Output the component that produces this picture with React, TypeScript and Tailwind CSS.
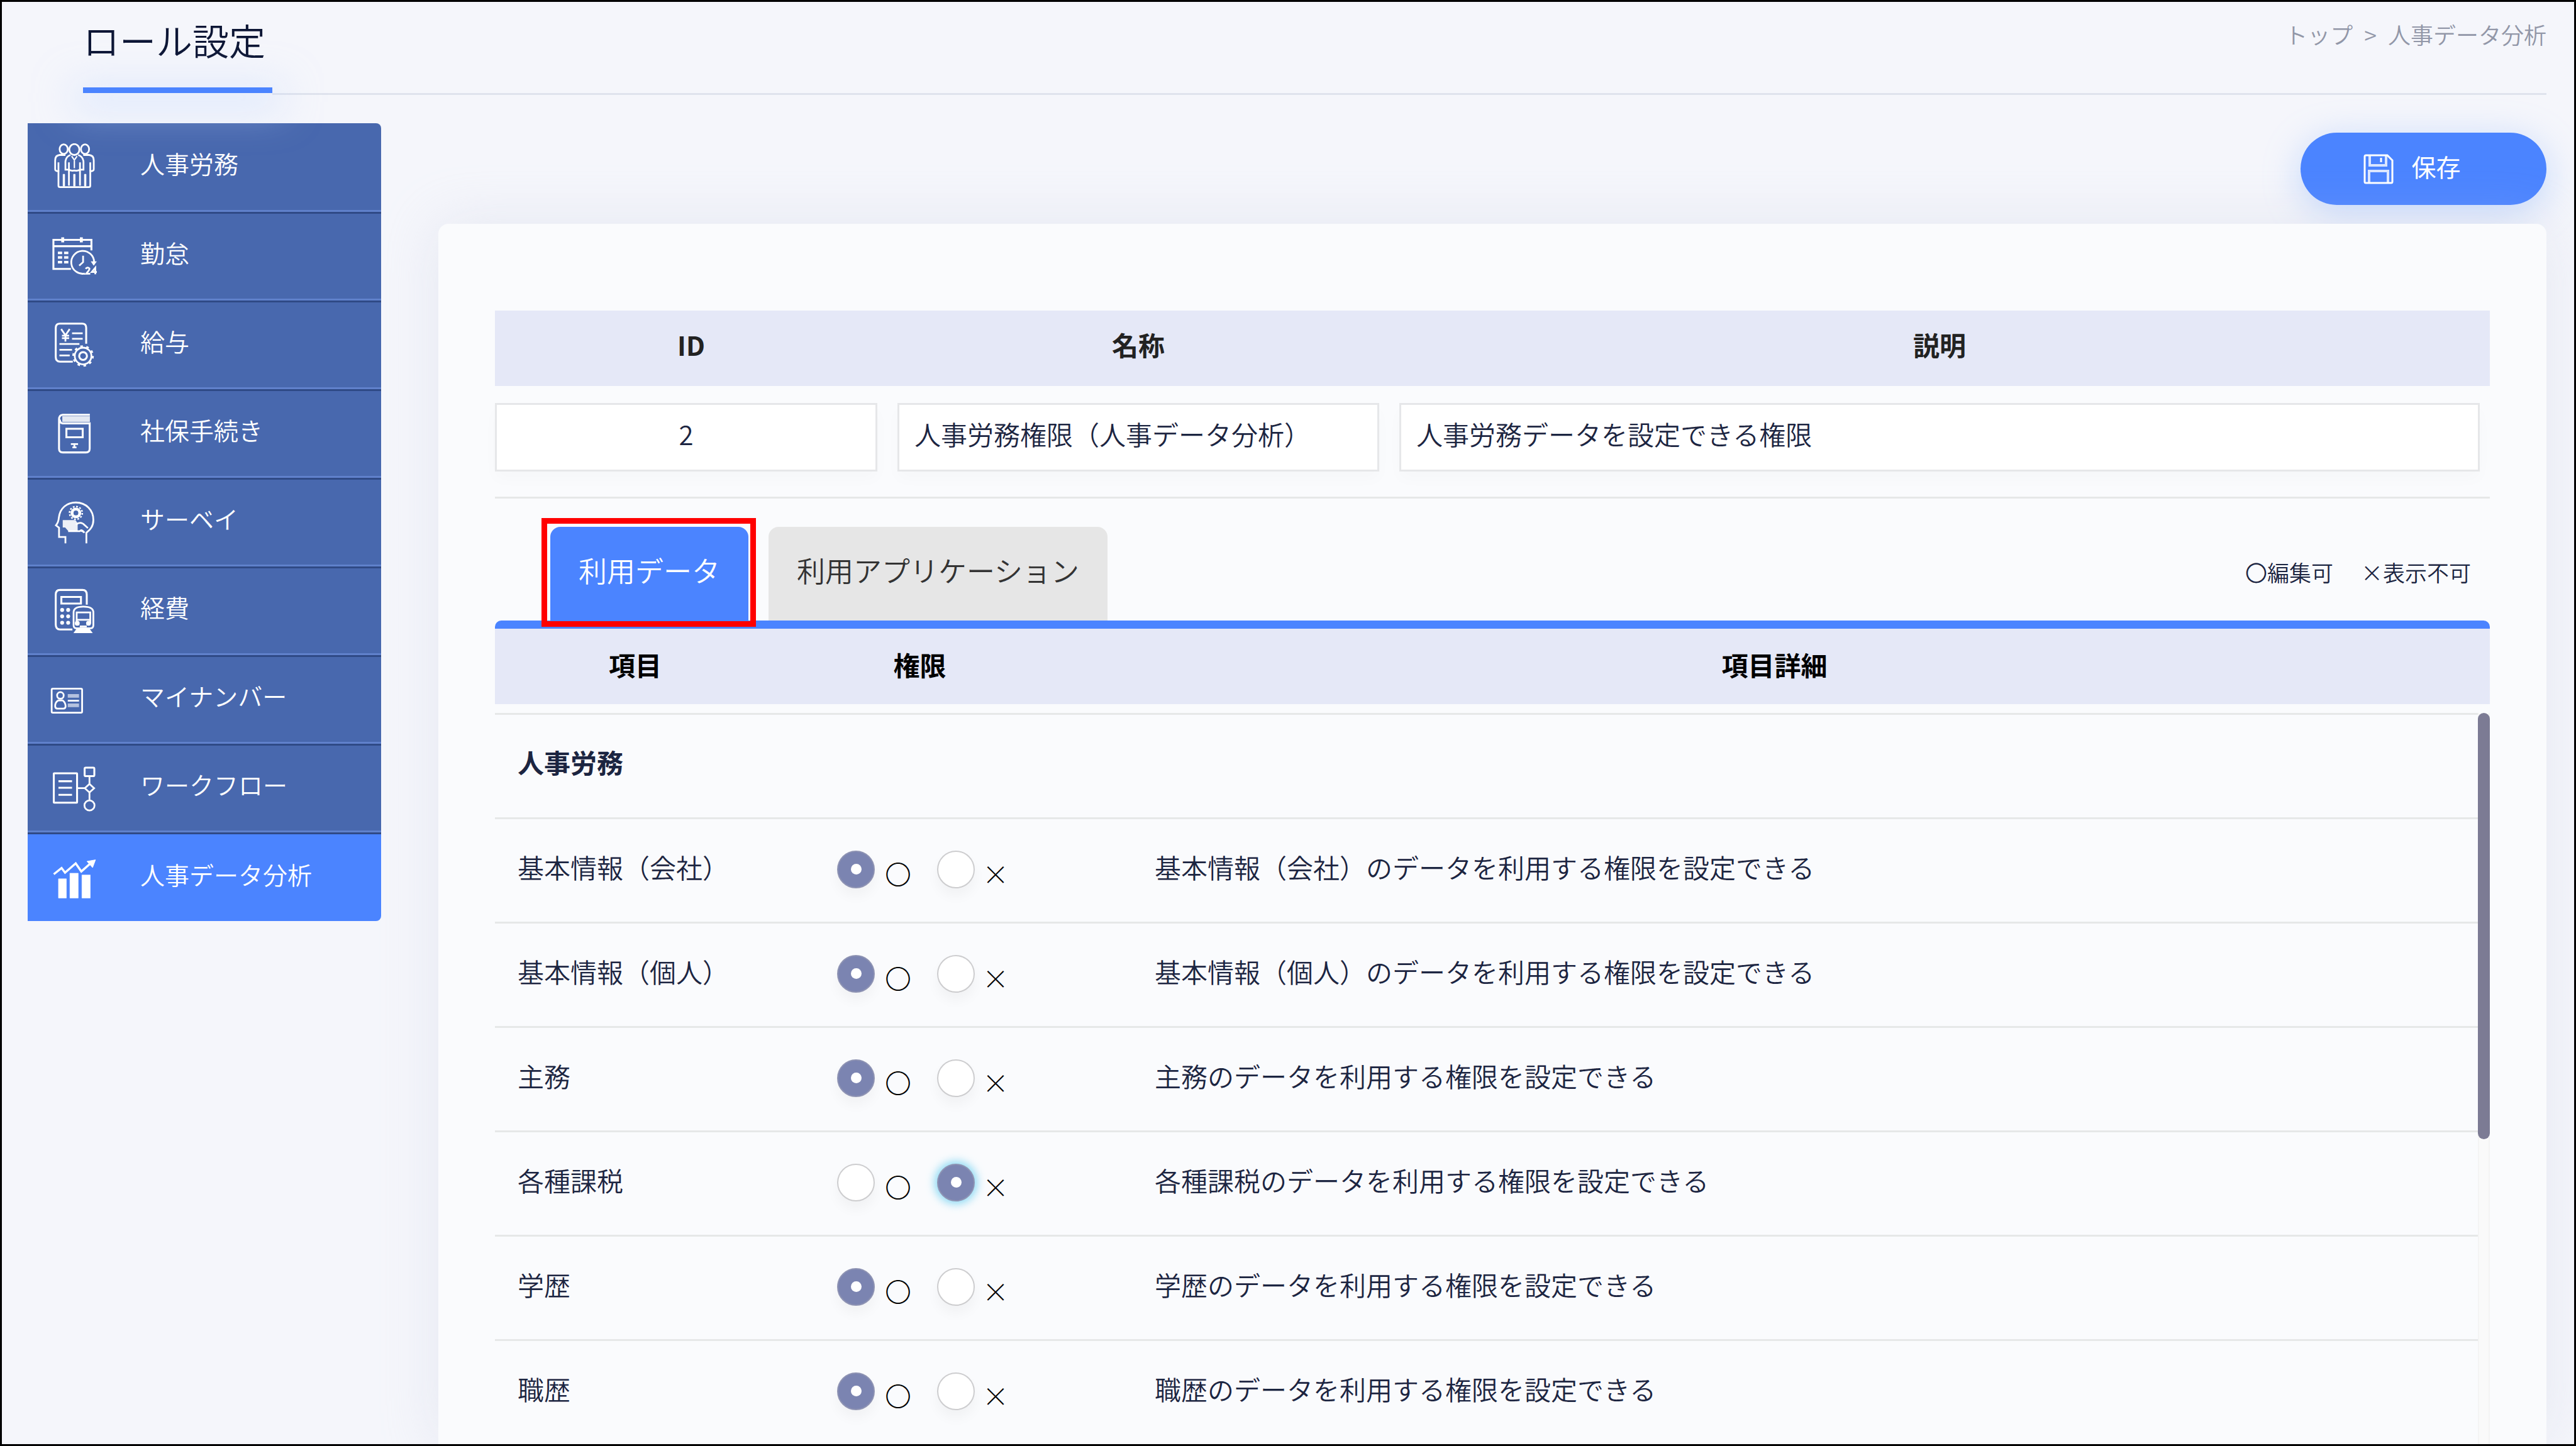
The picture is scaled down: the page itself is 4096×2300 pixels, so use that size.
import React, { useState } from "react";

const icons: { box: string; art: React.ReactNode }[] = [
  {
    box: "48 50 240 240",
    art: (
      <>
        <ellipse cx="117" cy="80" rx="21" ry="25" />
        <ellipse cx="227" cy="80" rx="21" ry="25" />
        <ellipse cx="172" cy="82" rx="26" ry="28" />
        <path d="M126 110H96Q73 112 73 138V184Q73 194 90 194V268Q90 276 98 276H246Q254 276 254 268V194Q272 194 272 184V138Q272 112 248 110H218" />
        <path d="M90 148V194M254 148V194M152 110Q128 118 126 145V186H144M192 110Q217 118 219 145V186H200M144 148V268M201 148V268M118 208V272M228 208V272M172 208V272M144 186Q158 194 172 190Q186 194 201 186" />
        <path d="M158 116L172 136L186 116M172 140V178" strokeWidth="7" />
        <path d="M172 210V270M118 210V270M228 210V270" opacity=".5" strokeWidth="13" />
      </>
    ),
  },
  {
    box: "48 506 240 240",
    art: (
      <>
        <path d="M260 594V540H64V690H154M64 573H258" strokeWidth="10" />
        <path d="M112 527V553M208 527V553" strokeWidth="15" />
        <path d="M87 607H109M119 607H141M87 631H109M119 631H141M87 655H109M119 655H141" strokeWidth="13" />
        <path d="M226 714A59 59 0 1 1 274 655" />
        <path d="M217 622V655L197 673" />
        <path d="M258 652H286L272 672Z" fill="white" strokeWidth="2" />
        <path d="M230 690Q240 678 250 688Q250 698 232 715H254M280 718V684L262 706H288" strokeWidth="9" />
      </>
    ),
  },
  {
    box: "48 961 240 240",
    art: (
      <>
        <path d="M233 1074V992Q233 970 212 970H98Q76 970 76 992V1142Q76 1166 98 1166H164" strokeWidth="10" />
        <path d="M104 998L126 1030L148 998M126 1030V1062M108 1032H145M108 1045H145" strokeWidth="9" />
        <path d="M160 1020H215M160 1048H215M95 1075H198M95 1105H160M95 1134H148" strokeWidth="9" />
        <circle cx="217" cy="1137" r="43" />
        <circle cx="217" cy="1137" r="20" strokeWidth="10" />
        <circle cx="217" cy="1137" r="50" strokeWidth="11" strokeDasharray="13 18.4" />
      </>
    ),
  },
  {
    box: "48 66 240 240",
    art: (
      <>
        <path d="M252 88H112Q93 90 93 112V262Q93 282 112 282H232Q251 282 251 262V132H112Q97 130 97 112" strokeWidth="10" />
        <path d="M112 96H250V122H112Z" fill="white" opacity=".85" strokeWidth="4" />
        <path d="M131 160H215V204H131Z" strokeWidth="10" />
        <path d="M154 239H191" strokeWidth="9" />
        <path d="M162 256H183M172 242V256" />
      </>
    ),
  },
  {
    box: "48 521 240 240",
    art: (
      <>
        <path d="M126 749V716H93V668L77 656Q90 640 92 616C98 566 134 538 180 538C232 538 270 578 270 628C270 660 256 676 234 694V749" strokeWidth="9" />
        <circle cx="180" cy="592" r="20" strokeWidth="15" />
        <circle cx="180" cy="592" r="33" strokeWidth="8" strokeDasharray="9 8.3" />
        <path d="M115 632H176L186 646V680H140L126 664H115Z" fill="white" opacity=".9" strokeWidth="6" />
        <path d="M180 652Q206 632 226 656L242 670M140 686H200Q210 674 224 694M206 684Q214 684 222 692" />
      </>
    ),
  },
  {
    box: "48 977 240 240",
    art: (
      <>
        <path d="M236 1064V1012Q236 988 214 988H98Q76 988 76 1012V1166Q76 1192 98 1192H162" strokeWidth="10" />
        <path d="M105 1024H206V1058H105Z" strokeWidth="10" />
        <g fill="white" stroke="none">
          <circle cx="109" cy="1091" r="10" />
          <circle cx="140" cy="1091" r="10" />
          <circle cx="109" cy="1124" r="10" />
          <circle cx="140" cy="1124" r="10" />
          <circle cx="109" cy="1157" r="10" />
          <circle cx="140" cy="1157" r="10" />
        </g>
        <path d="M168 1104Q168 1074 218 1074Q270 1074 270 1104V1170Q270 1186 254 1186H184Q168 1186 168 1170Z" />
        <path d="M184 1104H254V1142H184Z" />
        <path d="M184 1142V1162M254 1142V1162" />
        <circle cx="187" cy="1160" r="8" fill="white" />
        <circle cx="245" cy="1160" r="8" fill="white" />
        <path d="M200 1176H236M186 1192L176 1206H258L248 1192Z" fill="white" />
      </>
    ),
  },
  {
    box: "48 22 240 240",
    art: (
      <>
        <rect x="55" y="85" width="157" height="124" rx="6" />
        <circle cx="100" cy="120" r="17" />
        <path d="M88 146Q72 156 73 176Q74 188 84 188H116Q126 188 127 176Q126 156 112 146Z" />
        <path d="M138 122H196M138 171H196" strokeWidth="19" opacity=".6" />
        <path d="M138 147H196" />
      </>
    ),
  },
  {
    box: "48 477 240 240",
    art: (
      <>
        <rect x="66" y="519" width="120" height="152" rx="2" strokeWidth="10" />
        <path d="M90 560H160M90 594H160M90 630H160" strokeWidth="10" />
        <rect x="225" y="490" width="50" height="44" rx="6" strokeWidth="10" />
        <path d="M250 534V574M250 616V658M188 596H226" />
        <path d="M250 574L274 596L250 618L226 596Z" strokeWidth="9" />
        <circle cx="250" cy="685" r="26" strokeWidth="9" />
      </>
    ),
  },
  {
    box: "48 932 240 240",
    art: (
      <>
        <path d="M66 1034L106 1002L124 1026L179 978L208 1020L258 976" strokeWidth="11" />
        <path d="M237 968L281 960L266 1000Z" fill="white" strokeWidth="3" />
        <path d="M90 1058H131V1157H90ZM149 1029H192V1157H149ZM211 1038H254V1157H211Z" fill="white" strokeWidth="2" />
      </>
    ),
  },
];

const menu = [
  "人事労務",
  "勤怠",
  "給与",
  "社保手続き",
  "サーベイ",
  "経費",
  "マイナンバー",
  "ワークフロー",
  "人事データ分析",
];

const rows = [
  { name: "基本情報（会社）", allowed: true },
  { name: "基本情報（個人）", allowed: true },
  { name: "主務", allowed: true },
  { name: "各種課税", allowed: false, focused: true },
  { name: "学歴", allowed: true },
  { name: "職歴", allowed: true },
];

const fieldClass =
  "block h-[109px] w-full border-3 border-[#e6e7e9] bg-white px-6 pb-3 text-[42px] text-[#1c2541] shadow-[0_12px_24px_rgba(0,0,0,0.02)] outline-none";

const radioClass =
  "flex size-[60px] shrink-0 appearance-none items-center justify-center rounded-full border-2 border-[#cdcdcf] bg-white shadow-[0_12px_20px_rgba(0,0,0,0.04)] before:size-[17px] before:rounded-full before:bg-white before:content-[''] checked:border-[#8e93b3] checked:bg-[#7b84b1]";

const focusClass = " checked:border-[#4fbfe6] checked:shadow-[0_0_14px_4px_rgba(80,200,240,0.65)]";

function Sidebar() {
  return (
    <nav aria-label="メニュー" className="w-[562px] shrink-0 self-start">
      <ul className="overflow-hidden rounded-r-[8px]">
        {menu.map((label, i) => {
          const last = i === menu.length - 1;
          return (
            <li
              key={label}
              className={
                "h-[141px] " +
                (i > 0 ? "border-t-3 border-[#2f4a86] " : "") +
                (last ? "bg-[#4b84ff]" : "bg-[#4868ae]")
              }
            >
              <a
                href="#"
                aria-current={last ? "page" : undefined}
                className={
                  "flex h-full items-center pl-9 text-[39px] text-white " +
                  (last ? "" : "border-b-3 border-[#6081cb]")
                }
              >
                <svg
                  viewBox={icons[i].box}
                  className="mr-[69px] size-[74px] shrink-0"
                  fill="none"
                  stroke="white"
                  strokeWidth="9"
                  aria-hidden="true"
                >
                  {icons[i].art}
                </svg>
                <span className="pb-3">{label}</span>
              </a>
            </li>
          );
        })}
      </ul>
    </nav>
  );
}

function RoleTable() {
  return (
    <table className="w-full table-fixed border-separate border-spacing-0">
      <colgroup>
        <col className="w-[624px]" />
        <col className="w-[798px]" />
        <col />
      </colgroup>
      <thead>
        <tr className="h-[120px] bg-[#e5e8f7] text-[42px] text-[#222222]">
          <th className="pb-3.5">ID</th>
          <th className="pb-3.5">名称</th>
          <th className="pb-3.5">説明</th>
        </tr>
      </thead>
      <tbody>
        <tr>
          <td className="border-b-3 border-[#e6e8e8] pt-[27px] pr-4 pb-10">
            <input aria-label="ID" defaultValue="2" className={fieldClass + " text-center"} />
          </td>
          <td className="border-b-3 border-[#e6e8e8] px-4 pt-[27px] pb-10">
            <input aria-label="名称" defaultValue="人事労務権限（人事データ分析）" className={fieldClass} />
          </td>
          <td className="border-b-3 border-[#e6e8e8] px-4 pt-[27px] pb-10">
            <input aria-label="説明" defaultValue="人事労務データを設定できる権限" className={fieldClass} />
          </td>
        </tr>
      </tbody>
    </table>
  );
}

function Tabs() {
  const [active, setActive] = useState(0);
  return (
    <div className="flex items-end justify-between pt-[45px] pr-[30px] pl-[88px]">
      <div role="tablist" className="flex gap-8">
        {["利用データ", "利用アプリケーション"].map((label, i) => (
          <button
            key={label}
            role="tab"
            type="button"
            aria-selected={active === i}
            onClick={() => setActive(i)}
            className={
              "relative h-[149px] rounded-t-[16px] px-[45px] pb-3 text-[45px] " +
              (active === i ? "bg-[#4b84ff] text-white" : "bg-[#e6e6e6] text-[#333333]")
            }
          >
            {label}
            {i === 0 && <span className="absolute -top-3.5 -right-3 -bottom-2.5 -left-3.5 border-9 border-[#ff0000]" />}
          </button>
        ))}
      </div>
      <p className="flex h-[149px] items-center gap-[44px] pb-1 text-[35px] text-[#1c2541]">
        <span>〇編集可</span>
        <span>×表示不可</span>
      </p>
    </div>
  );
}

function PermissionTable() {
  return (
    <>
      <div className="h-[13px] shrink-0 rounded-t-[10px] bg-[#4b84ff]" />
      <table className="w-full table-fixed border-separate border-spacing-0">
        <colgroup>
          <col className="w-[446px]" />
          <col className="w-[459px]" />
          <col />
        </colgroup>
        <thead>
          <tr className="h-[120px] bg-[#e5e8f7] text-[42px] text-black">
            <th className="pb-2">項目</th>
            <th className="pb-2">権限</th>
            <th className="pr-2 pb-2">項目詳細</th>
          </tr>
        </thead>
      </table>
      <div className="mt-3.5 flex min-h-0 flex-1 overflow-hidden">
        <table className="flex-1 table-fixed border-separate border-spacing-0 self-start text-[42px] text-[#1c2541]">
          <colgroup>
            <col className="w-[544px]" />
            <col className="w-[505px]" />
            <col />
          </colgroup>
          <tbody>
            <tr className="h-[166px]">
              <th colSpan={3} className="border-t-3 border-[#e6e8e8] pb-3.5 pl-9 text-left">
                人事労務
              </th>
            </tr>
            {rows.map((row) => (
              <tr key={row.name} className="h-[166px]">
                <td className="border-t-3 border-[#e6e8e8] pb-3 pl-9">{row.name}</td>
                <td className="border-t-3 border-[#e6e8e8] pb-1">
                  <div className="flex gap-[41px]">
                    <label className="flex items-center gap-4">
                      <input type="radio" name={row.name} defaultChecked={row.allowed} className={radioClass} />
                      <span className="mt-3 font-light text-black">〇</span>
                    </label>
                    <label className="flex items-center gap-3">
                      <input
                        type="radio"
                        name={row.name}
                        defaultChecked={!row.allowed}
                        className={radioClass + (row.focused ? focusClass : "")}
                      />
                      <span className="mt-3 font-light text-black">×</span>
                    </label>
                  </div>
                </td>
                <td className="border-t-3 border-[#e6e8e8] pb-3">{row.name}のデータを利用する権限を設定できる</td>
              </tr>
            ))}
          </tbody>
        </table>
        <div className="w-[19px] shrink-0 border-x-2 border-[#f4f4f4] bg-[#fafafa]">
          <div className="-mx-0.5 h-[678px] rounded-full bg-[#7c7b94]" />
        </div>
      </div>
    </>
  );
}

export default function App() {
  return (
    <div className="flex h-screen flex-col overflow-hidden border-3 border-black bg-[#f5f6fb] font-['Noto_Sans_CJK_JP',sans-serif] font-[350]">
      <header className="flex h-[148px] shrink-0 items-start pr-11 pl-[129px]">
        <div className="relative z-10 flex h-[145px] w-[301px] flex-col">
          <h1 className="flex flex-1 items-center pb-4 text-[58px] leading-none font-[350] text-[#0d1635]">ロール設定</h1>
          <div className="h-[9px] bg-[#4b84ff] shadow-[0_12px_60px_16px_rgba(200,219,255,0.5)]" />
        </div>
        <nav
          aria-label="パンくず"
          className="flex h-full flex-1 items-start justify-end gap-[18px] border-b-3 border-[#dfe3ed] pt-6 text-[36px] text-[#9297a8]"
        >
          <a href="#">トップ</a>
          <span>&gt;</span>
          <span>人事データ分析</span>
        </nav>
      </header>
      <div className="flex min-h-0 flex-1 pt-[45px] pr-11 pl-[41px]">
        <Sidebar />
        <main className="ml-[91px] flex min-w-0 flex-1 flex-col pt-[15px]">
          <button
            type="button"
            className="flex h-[115px] w-[391px] shrink-0 items-center justify-center gap-7 self-end rounded-full bg-[#4b84ff] pr-9 text-[39px] font-normal text-white shadow-[0_12px_60px_rgba(120,170,255,0.4)]"
          >
            <svg viewBox="0 0 48 48" className="size-[48px]" fill="none" stroke="white" strokeWidth="3" aria-hidden="true">
              <path d="M4 2H38L46 10V44Q46 46 44 46H4Q2 46 2 44V4Q2 2 4 2Z" />
              <path d="M10 3V18H36V3M9 45V27H39V45" opacity=".8" strokeWidth="4" />
              <path d="M28 6V13" />
            </svg>
            <span className="pb-2">保存</span>
          </button>
          <section className="mt-[30px] flex min-h-0 flex-1 flex-col rounded-t-[16px] bg-[#fafbfd] px-[90px] pt-[138px] shadow-[0_0_90px_rgba(196,202,225,0.32)]">
            <RoleTable />
            <Tabs />
            <PermissionTable />
          </section>
        </main>
      </div>
    </div>
  );
}
